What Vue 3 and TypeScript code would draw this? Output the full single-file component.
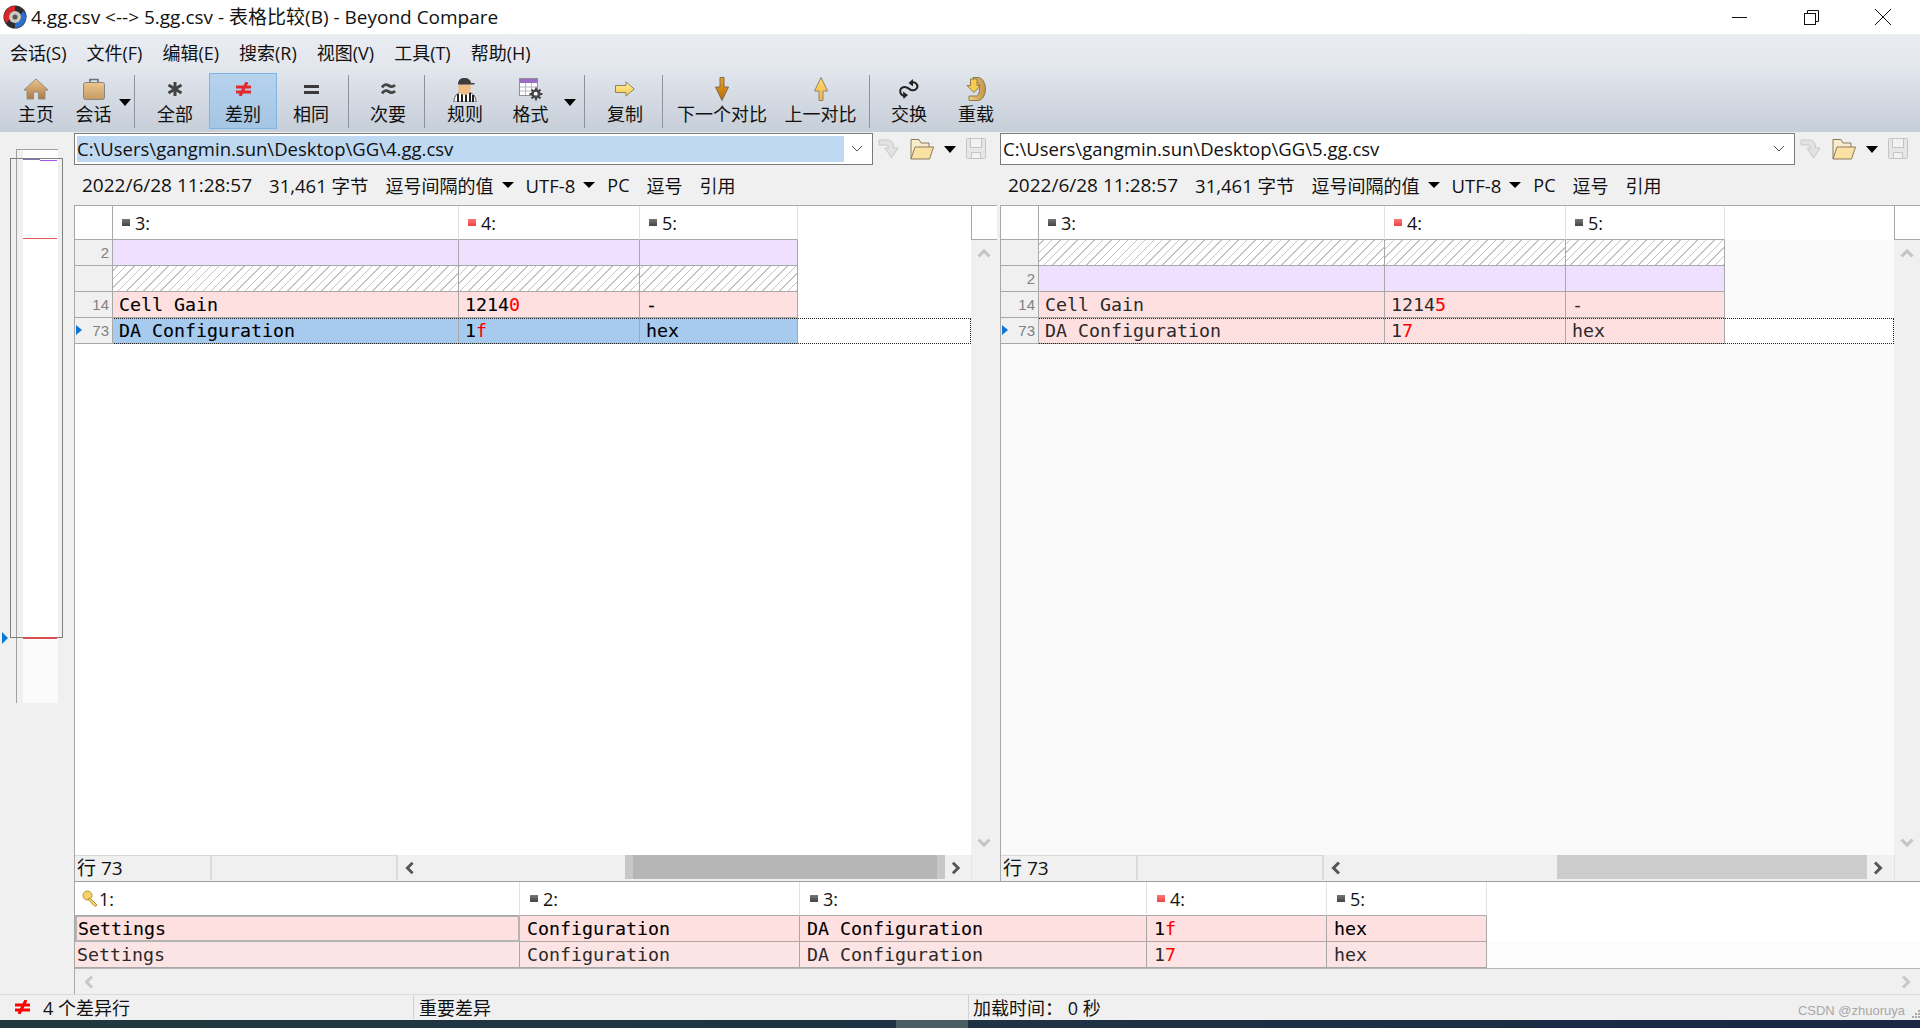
<script setup lang="ts">
interface Cell {
  text: string
  diff?: string
}
interface Row {
  line: string
  kind: 'added' | 'hatch' | 'diff'
  cells: Cell[]
  current?: boolean
}
interface Pane {
  id: string
  path: string
  columns: string
  active: boolean
  rows: Row[]
}
interface Tool {
  id: string
  label: string
  width: number
  active?: boolean
  menu?: 'near' | 'far'
  sep?: boolean
}

const menus = ['会话(S)', '文件(F)', '编辑(E)', '搜索(R)', '视图(V)', '工具(T)', '帮助(H)']

const tools: Tool[] = [
  { id: 'home', label: '主页', width: 68 },
  { id: 'case', label: '会话', width: 47, menu: 'near', sep: true },
  { id: 'all', label: '全部', width: 68 },
  { id: 'diff', label: '差别', width: 68, active: true },
  { id: 'same', label: '相同', width: 68, sep: true },
  { id: 'minor', label: '次要', width: 66, sep: true },
  { id: 'rules', label: '规则', width: 68 },
  { id: 'format', label: '格式', width: 63, menu: 'far', sep: true },
  { id: 'copy', label: '复制', width: 68, sep: true },
  { id: 'next', label: '下一个对比', width: 106 },
  { id: 'prev', label: '上一对比', width: 91, sep: true },
  { id: 'swap', label: '交换', width: 66 },
  { id: 'reload', label: '重载', width: 68 },
]

const headCols = [
  { label: '3:', red: false },
  { label: '4:', red: true },
  { label: '5:', red: false },
]

const panes: Pane[] = [
  {
    id: 'left',
    path: 'C:\\Users\\gangmin.sun\\Desktop\\GG\\4.gg.csv',
    columns: '38px 346px 181px 158px 1fr',
    active: true,
    rows: [
      { line: '2', kind: 'added', cells: [{ text: '' }, { text: '' }, { text: '' }] },
      { line: '', kind: 'hatch', cells: [{ text: '' }, { text: '' }, { text: '' }] },
      { line: '14', kind: 'diff', cells: [{ text: 'Cell Gain' }, { text: '1214', diff: '0' }, { text: '-' }] },
      {
        line: '73',
        kind: 'diff',
        current: true,
        cells: [{ text: 'DA Configuration' }, { text: '1', diff: 'f' }, { text: 'hex' }],
      },
    ],
  },
  {
    id: 'right',
    path: 'C:\\Users\\gangmin.sun\\Desktop\\GG\\5.gg.csv',
    columns: '38px 346px 181px 159px 1fr',
    active: false,
    rows: [
      { line: '', kind: 'hatch', cells: [{ text: '' }, { text: '' }, { text: '' }] },
      { line: '2', kind: 'added', cells: [{ text: '' }, { text: '' }, { text: '' }] },
      { line: '14', kind: 'diff', cells: [{ text: 'Cell Gain' }, { text: '1214', diff: '5' }, { text: '-' }] },
      {
        line: '73',
        kind: 'diff',
        current: true,
        cells: [{ text: 'DA Configuration' }, { text: '1', diff: '7' }, { text: 'hex' }],
      },
    ],
  },
]

const detailColumns = '445px 280px 347px 180px 160px 1fr'
const detailHead = [
  { label: '2:', red: false },
  { label: '3:', red: false },
  { label: '4:', red: true },
  { label: '5:', red: false },
]
const detailRows = [
  [{ text: 'Settings' }, { text: 'Configuration' }, { text: 'DA Configuration' }, { text: '1', diff: 'f' }, { text: 'hex' }],
  [{ text: 'Settings' }, { text: 'Configuration' }, { text: 'DA Configuration' }, { text: '1', diff: '7' }, { text: 'hex' }],
] as Cell[][]

// resize grip in the corner of the status bar
const gripDots = [
  [8, 1],
  [5, 4],
  [8, 4],
  [2, 7],
  [5, 7],
  [8, 7],
]
</script>

<template>
  <div class="app">
    <header class="titlebar">
      <svg class="logo" width="26" height="26" viewBox="0 0 26 26">
        <circle cx="13" cy="13" r="11.5" fill="#2b2b30" />
        <path d="M2 13A11 11 0 0 1 13 2V7A6 6 0 0 0 7 13H10L4.500 19L1 13Z" fill="#d8262c" />
        <path d="M24 13A11 11 0 0 1 13 24V19A6 6 0 0 0 19 13H16L21.500 7L25 13Z" fill="#2a6fd0" />
        <circle cx="13" cy="13" r="6" fill="#c9c9c0" />
        <circle cx="13" cy="13" r="2.500" fill="#56564e" />
      </svg>
      <span class="title">4.gg.csv &lt;--&gt; 5.gg.csv - 表格比较(B) - Beyond Compare</span>
      <div class="winctl">
        <svg width="18" height="18" viewBox="0 0 18 18"><path d="M2 9.500H17" stroke="#111" stroke-width="1" /></svg>
        <svg width="18" height="18" viewBox="0 0 18 18" fill="none" stroke="#111">
          <rect x="2.500" y="5.500" width="11" height="11" />
          <path d="M5.500 5.500V2.500H16.500V13.500H13.500" />
        </svg>
        <svg width="18" height="18" viewBox="0 0 18 18"><path d="M1 1L17 17M17 1L1 17" stroke="#111" stroke-width="1" /></svg>
      </div>
    </header>

    <div class="chrome">
      <nav class="menubar">
        <span v-for="m in menus" :key="m">{{ m }}</span>
      </nav>
      <div class="toolbar">
        <template v-for="t in tools" :key="t.id">
          <button class="tool" :class="{ on: t.active }" :style="{ width: t.width + 'px' }">
            <span class="tool-icon">
              <svg v-if="t.id === 'home'" width="26" height="22" viewBox="0 0 26 22">
                <defs>
                  <linearGradient id="homeFill" x1="0" y1="0" x2="0" y2="1">
                    <stop offset="0" stop-color="#eec48c" />
                    <stop offset="1" stop-color="#ad7a42" />
                  </linearGradient>
                </defs>
                <path d="M13 1L25 12H22V21H15.500V14H10.500V21H4V12H1Z" fill="url(#homeFill)" stroke="#8f8c80" />
              </svg>
              <svg v-else-if="t.id === 'case'" width="22" height="22" viewBox="0 0 22 22">
                <defs>
                  <linearGradient id="caseFill" x1="0" y1="0" x2="0" y2="1">
                    <stop offset="0" stop-color="#ecc68e" />
                    <stop offset="1" stop-color="#c69a62" />
                  </linearGradient>
                </defs>
                <path d="M7 5V1.500H15V5" fill="none" stroke="#707070" stroke-width="1.600" />
                <rect x="0.500" y="4.500" width="21" height="17" rx="2" fill="url(#caseFill)" stroke="#868686" />
              </svg>
              <svg v-else-if="t.id === 'all'" width="16" height="14" viewBox="0 0 16 14">
                <path d="M8 0V14M1.500 3L14.500 11M14.500 3L1.500 11" stroke="#444" stroke-width="3" />
              </svg>
              <svg v-else-if="t.id === 'diff'" width="15" height="14" viewBox="0 0 15 14">
                <path d="M0 5H15M0 10H15M11 0L4 14" stroke="#e02a2e" stroke-width="3" />
              </svg>
              <svg v-else-if="t.id === 'same'" width="15" height="9" viewBox="0 0 15 9">
                <path d="M0 1.500H15M0 7.500H15" stroke="#3a3a3a" stroke-width="3" />
              </svg>
              <svg v-else-if="t.id === 'minor'" width="15" height="12" viewBox="0 0 15 12" fill="none">
                <path d="M1 4.500Q4 0 7.500 2.500T14 2M1 10.500Q4 6 7.500 8.500T14 8" stroke="#444" stroke-width="2.800" />
              </svg>
              <svg v-else-if="t.id === 'rules'" width="24" height="25" viewBox="0 0 24 25">
                <path d="M1 25C1 18 5 16 8 15H15C19 16 23 18 23 25Z" fill="#fff" stroke="#555" />
                <path d="M5 17V25M9 15.500V25M13 15.500V25M17 16V25M20 18V25" stroke="#222" stroke-width="2" />
                <ellipse cx="11.500" cy="11" rx="6.500" ry="7" fill="#eebd88" />
                <path d="M5 8C5 2 8 1 11.500 1C15 1 18 3 18 6H21.500V7.500H5Z" fill="#3c3c3c" />
              </svg>
              <svg v-else-if="t.id === 'format'" width="24" height="23" viewBox="0 0 24 23">
                <rect x="0.500" y="0.500" width="18" height="17" fill="#fff" stroke="#909090" />
                <rect x="1" y="1" width="17" height="4" fill="#9a6cc8" />
                <path d="M1 9H18M1 13H18M6.500 5V17M12.500 5V17" stroke="#b8b8c0" />
                <circle cx="17" cy="16" r="3.500" fill="none" stroke="#444" stroke-width="2.400" />
                <path d="M17 9.500V22.500M10.500 16H23.500M12.500 11.500L21.500 20.500M21.500 11.500L12.500 20.500" stroke="#444" stroke-width="1.800" stroke-dasharray="2.600 8 2.600" />
              </svg>
              <svg v-else-if="t.id === 'copy'" width="20" height="16" viewBox="0 0 20 16">
                <defs>
                  <linearGradient id="copyFill" x1="0" y1="0" x2="0" y2="1">
                    <stop offset="0" stop-color="#fff0a0" />
                    <stop offset="1" stop-color="#f4c848" />
                  </linearGradient>
                </defs>
                <path d="M.5 4.500H11V.8L19.200 8L11 15.200V11.500H.5Z" fill="url(#copyFill)" stroke="#8c8468" />
              </svg>
              <svg v-else-if="t.id === 'next'" width="14" height="24" viewBox="0 0 14 24">
                <defs>
                  <linearGradient id="nextFill" x1="0" y1="0" x2="0" y2="1">
                    <stop offset="0" stop-color="#f0a020" />
                    <stop offset="1" stop-color="#b86c08" />
                  </linearGradient>
                </defs>
                <path d="M5 .5H9V10H13.500L7 23.500L.5 10H5Z" fill="url(#nextFill)" stroke="#7c6a50" />
              </svg>
              <svg v-else-if="t.id === 'prev'" width="14" height="24" viewBox="0 0 14 24">
                <defs>
                  <linearGradient id="prevFill" x1="0" y1="0" x2="0" y2="1">
                    <stop offset="0" stop-color="#ffd870" />
                    <stop offset="1" stop-color="#f2b840" />
                  </linearGradient>
                </defs>
                <path d="M5 23.500H9V14H13.500L7 .5L.5 14H5Z" fill="url(#prevFill)" stroke="#8c8468" />
              </svg>
              <svg v-else-if="t.id === 'swap'" width="22" height="20" viewBox="0 0 22 20" fill="none">
                <path d="M6 17C1 15 1 9 6 8C9 7.500 11 10 13 11C18 12.500 21 8 18.500 5C17 3 14.500 3 12 4" stroke="#222" stroke-width="2" />
                <path d="M15 0L10.500 4L15 7.500Z" fill="#222" />
                <path d="M5 12.500L10 16L5.500 20Z" fill="#222" />
              </svg>
              <svg v-else-if="t.id === 'reload'" width="20" height="24" viewBox="0 0 20 24">
                <defs>
                  <linearGradient id="loadFill" x1="0" y1="0" x2="1" y2="0">
                    <stop offset="0" stop-color="#f0d080" />
                    <stop offset="1" stop-color="#c09448" />
                  </linearGradient>
                </defs>
                <path d="M7 .5H12A7.500 11.500 0 0 1 12 23.500H3V19H10.500A3 7 0 0 0 10.500 5H7Z" fill="url(#loadFill)" stroke="#8c7a50" />
                <path d="M4.500 2H11V8.500H14.500L8 15.500L1 8.500H4.500Z" fill="#f8cc50" stroke="#8c7a50" />
              </svg>
            </span>
            <span class="tool-label">{{ t.label }}</span>
          </button>
          <i v-if="t.menu" class="tool-caret" :class="t.menu" />
          <i v-if="t.sep" class="tool-sep" />
        </template>
      </div>
    </div>

    <div class="body">
      <aside class="overview">
        <div class="ov-lane">
          <div class="ov-frame" />
          <i class="ov-mark purple dim" />
          <i class="ov-mark purple half" />
          <i class="ov-mark red" />
          <i class="ov-mark red strong" />
        </div>
        <i class="ov-pointer" />
      </aside>

      <div class="work">
        <div class="panes">
          <section v-for="p in panes" :key="p.id" class="pane" :class="p.id">
            <div class="addr-row">
              <div class="addr">
                <span class="addr-text" :class="{ picked: p.active }">{{ p.path }}</span>
                <svg class="addr-chev" width="12" height="8" viewBox="0 0 12 8" fill="none">
                  <path d="M1 1L6 6L11 1" stroke="#555" />
                </svg>
              </div>
              <div class="addr-tools">
                <svg width="22" height="20" viewBox="0 0 22 20">
                  <path d="M1 1H9C14 1 15.500 4 15.500 9H20L13.500 19L7 9H10.500C10.500 7 9.500 6 8 6H1Z" fill="#e2e2e2" stroke="#c8c8c8" />
                </svg>
                <svg width="24" height="22" viewBox="0 0 24 22">
                  <path d="M1 21V1.500H9L11 5H19V9" fill="#f8eccc" stroke="#8a7a5a" />
                  <path d="M1 21L5 9H23.500L19.500 21Z" fill="#fbe2a4" stroke="#8a7a5a" />
                </svg>
                <i class="caret" />
                <svg width="20" height="22" viewBox="0 0 20 22" fill="none" stroke="#c4c4c4">
                  <rect x="0.500" y="0.500" width="19" height="20" rx="1" fill="#e6e6e6" />
                  <rect x="4.500" y="0.500" width="11" height="9" fill="#f2f2f2" />
                  <rect x="5.500" y="14.500" width="9" height="6" fill="#f2f2f2" />
                </svg>
              </div>
            </div>

            <div class="info">
              <span class="stamp">2022/6/28 11:28:57</span>
              <span class="bytes">31,461 字节</span>
              <span class="with-caret">逗号间隔的值<i class="caret small" /></span>
              <span class="with-caret bytes">UTF-8<i class="caret small" /></span>
              <span>PC</span>
              <span>逗号</span>
              <span>引用</span>
            </div>

            <div class="grid-box">
              <div class="grid" :class="{ idle: !p.active }">
                <div class="row head" :style="{ gridTemplateColumns: p.columns }">
                  <div class="gutter-head" />
                  <div v-for="c in headCols" :key="c.label" class="col-head">
                    <i class="col-mark" :class="{ red: c.red }" />{{ c.label }}
                  </div>
                </div>
                <div
                  v-for="(r, i) in p.rows"
                  :key="i"
                  class="row"
                  :class="{ current: r.current }"
                  :style="{ gridTemplateColumns: p.columns }"
                >
                  <div class="gutter">
                    <i v-if="r.current" class="pointer" />
                    {{ r.line }}
                  </div>
                  <div
                    v-for="(c, j) in r.cells"
                    :key="j"
                    class="cell"
                    :class="[r.kind, { blue: r.current && p.active }]"
                  >{{ c.text }}<span v-if="c.diff" class="delta">{{ c.diff }}</span></div>
                </div>
              </div>
              <div class="vscroll">
                <div class="corner" />
                <div class="vtrack">
                  <svg width="14" height="9" viewBox="0 0 14 9" fill="none"><path d="M1.500 7.500L7 2L12.500 7.500" stroke="#c4c4c4" stroke-width="3" /></svg>
                  <svg width="14" height="9" viewBox="0 0 14 9" fill="none"><path d="M1.500 1.500L7 7L12.500 1.500" stroke="#c4c4c4" stroke-width="3" /></svg>
                </div>
              </div>
            </div>

            <div class="pane-status">
              <span class="st-line">行 73</span>
              <span class="st-empty" />
              <div class="hscroll">
                <svg width="10" height="14" viewBox="0 0 10 14" fill="none"><path d="M8 1.500L2.500 7L8 12.500" stroke="#555" stroke-width="3" /></svg>
                <div class="hthumb" />
                <svg width="10" height="14" viewBox="0 0 10 14" fill="none"><path d="M2 1.500L7.500 7L2 12.500" stroke="#555" stroke-width="3" /></svg>
              </div>
              <span class="st-corner" />
            </div>
          </section>
        </div>

        <section class="detail">
          <div class="row d-head" :style="{ gridTemplateColumns: detailColumns }">
            <div class="d-col first">
              <svg width="16" height="17" viewBox="0 0 16 17">
                <circle cx="5.500" cy="5.500" r="4.500" fill="#f6d268" stroke="#b89030" />
                <path d="M8 8L15 15L13 16.500L11.500 15L10.500 14L6 9Z" fill="#f6d268" stroke="#b89030" />
              </svg>
              1:
            </div>
            <div v-for="c in detailHead" :key="c.label" class="d-col">
              <i class="col-mark" :class="{ red: c.red }" />{{ c.label }}
            </div>
          </div>
          <div
            v-for="(r, i) in detailRows"
            :key="i"
            class="row d-row"
            :class="{ lower: i === 1 }"
            :style="{ gridTemplateColumns: detailColumns }"
          >
            <div
              v-for="(c, j) in r"
              :key="j"
              class="d-cell"
              :class="{ first: j === 0, focus: i === 0 && j === 0 }"
            >{{ c.text }}<span v-if="c.diff" class="delta">{{ c.diff }}</span></div>
          </div>
          <div class="d-scroll">
            <svg width="10" height="14" viewBox="0 0 10 14" fill="none"><path d="M8 1.500L2.500 7L8 12.500" stroke="#c8c8c8" stroke-width="3" /></svg>
            <svg width="10" height="14" viewBox="0 0 10 14" fill="none"><path d="M2 1.500L7.500 7L2 12.500" stroke="#c8c8c8" stroke-width="3" /></svg>
          </div>
        </section>
      </div>
    </div>

    <footer class="statusbar">
      <div class="sb-cell one">
        <svg width="15" height="14" viewBox="0 0 15 14">
          <path d="M0 5H15M0 10H15M11 0L4 14" stroke="#f00" stroke-width="3" />
        </svg>
        <span>4 个差异行</span>
      </div>
      <div class="sb-cell two">重要差异</div>
      <div class="sb-cell three">加载时间：&nbsp;0 秒</div>
      <span class="watermark">CSDN @zhuoruya</span>
      <svg class="grip" width="10" height="10" viewBox="0 0 10 10">
        <rect v-for="(d, i) in gripDots" :key="i" :x="d[0]" :y="d[1]" width="2" height="2" fill="#a8a8a8" />
      </svg>
    </footer>
    <div class="taskbar"><i class="task-item" /></div>
  </div>
</template>

<style>
html,
body {
  margin: 0;
  overflow: hidden;
  background: #f0f0f0;
}
</style>

<style scoped>
.app {
  width: 1920px;
  height: 1028px;
  display: flex;
  flex-direction: column;
  overflow: hidden;
  font-family: 'Open Sans', 'Noto Sans CJK SC', sans-serif;
  font-size: 18px;
  color: #111;
  background: #f0f0f0;
}

/* title bar */
.titlebar {
  height: 34px;
  flex: none;
  display: flex;
  align-items: center;
  background: #fff;
  padding-left: 2px;
}
.logo {
  margin-right: 3px;
}
.title {
  line-height: 34px;
  font-size: 19px;
  white-space: nowrap;
}
.winctl {
  margin-left: auto;
  display: flex;
  gap: 54px;
  padding-right: 28px;
  align-items: center;
}

/* menu + toolbar share one gradient */
.chrome {
  height: 98px;
  flex: none;
  background: linear-gradient(#eaedf2, #e2e6ed 35%, #c6ced8);
  border-bottom: 0;
}
.menubar {
  height: 38px;
  display: flex;
  align-items: center;
  gap: 20px;
  padding: 0 0 2px 10px;
  box-sizing: border-box;
}
.toolbar {
  height: 60px;
  display: flex;
  align-items: flex-start;
  padding: 1px 0 0 2px;
  box-sizing: border-box;
}
.tool {
  flex: none;
  height: 56px;
  padding: 2px 0 0;
  margin: 0;
  border: 1px solid transparent;
  background: none;
  box-sizing: border-box;
  display: flex;
  flex-direction: column;
  align-items: center;
  font: inherit;
  color: inherit;
}
.tool.on {
  background: linear-gradient(#b6d3ee, #a4c5e4);
  border-color: #7fb5e6;
}
.tool-icon {
  height: 26px;
  display: flex;
  align-items: center;
  justify-content: center;
}
.tool-label {
  line-height: 24px;
  white-space: nowrap;
}
.tool-caret {
  flex: none;
  width: 0;
  height: 0;
  margin: 26px 0 0 2px;
  border-left: 6.5px solid transparent;
  border-right: 6.5px solid transparent;
  border-top: 7px solid #000;
}
.tool-caret.far {
  margin: 26px 5px 0 2px;
}
.tool-sep {
  flex: none;
  width: 1px;
  height: 53px;
  margin: 2px 6px 0 3px;
  background: #8c939c;
}

/* work area */
.body {
  flex: 1;
  min-height: 0;
  display: flex;
}
.overview {
  width: 74px;
  flex: none;
  position: relative;
}
.ov-lane {
  position: absolute;
  left: 16px;
  top: 17px;
  width: 42px;
  height: 554px;
  box-sizing: border-box;
  border-top: 1px solid #a0a0a0;
  border-left: 1px solid #a0a0a0;
  background: linear-gradient(90deg, #f0f0f0 6px, #fff 6px);
}
.ov-frame {
  position: absolute;
  left: -7px;
  top: 8px;
  width: 53px;
  height: 480px;
  box-sizing: border-box;
  border: 1px solid #808080;
  z-index: 1;
}
.ov-lane::after {
  content: '';
  position: absolute;
  left: 6px;
  right: 0;
  top: 489px;
  bottom: 0;
  background: #fbfbfb;
}
.ov-mark {
  position: absolute;
  left: 6px;
  right: 1px;
  height: 1px;
  z-index: 2;
}
.ov-mark.purple {
  top: 9px;
  background: #a855f7;
}
.ov-mark.purple.dim {
  right: 18px;
  background: #8a6cc0;
}
.ov-mark.purple.half {
  left: 23px;
  top: 10px;
}
.ov-mark.red {
  top: 88px;
  background: #e25656;
}
.ov-mark.red.strong {
  top: 487px;
  height: 2px;
  background: #d85050;
}
.ov-pointer {
  position: absolute;
  left: 2px;
  top: 500px;
  width: 0;
  height: 0;
  border-left: 6px solid #0a78d8;
  border-top: 6px solid transparent;
  border-bottom: 6px solid transparent;
}

.work {
  flex: 1;
  min-width: 0;
  display: flex;
  flex-direction: column;
}
.panes {
  height: 749px;
  flex: none;
  display: flex;
  gap: 3px;
}
.pane {
  display: flex;
  flex-direction: column;
}
.pane.left {
  width: 923px;
}
.pane.right {
  width: 920px;
}

.addr-row {
  height: 32px;
  margin-top: 1px;
  display: flex;
  flex: none;
}
.addr {
  flex: 1;
  min-width: 0;
  box-sizing: border-box;
  border: 1px solid #7a7a7a;
  background: #fff;
  display: flex;
  align-items: center;
  padding: 0 2px;
}
.addr-text {
  flex: 0 0 calc(100% - 26px);
  line-height: 26px;
  font-size: 18.5px;
  box-sizing: border-box;
  white-space: nowrap;
}
.addr-text.picked {
  background: #bfd9f2;
}
.addr-chev {
  margin-left: 7px;
}
.addr-tools {
  width: 124px;
  flex: none;
  display: flex;
  align-items: center;
  gap: 10px;
  padding-left: 5px;
  box-sizing: border-box;
}
.pane.right .addr-tools {
  width: 125px;
}
.caret {
  display: block;
  width: 0;
  height: 0;
  border-left: 6px solid transparent;
  border-right: 6px solid transparent;
  border-top: 7px solid #000;
}
.caret.small {
  border-top-width: 6px;
  margin: 0 -5px 0 8px;
}

.info {
  height: 40px;
  flex: none;
  display: flex;
  align-items: center;
  gap: 17px;
  padding-left: 8px;
  white-space: nowrap;
}
.stamp {
  font-size: 19px;
}
.bytes {
  font-size: 18.5px;
}
.with-caret {
  display: flex;
  align-items: center;
}

.grid-box {
  flex: 1;
  min-height: 0;
  display: flex;
  border-top: 1px solid #a8a8a8;
  border-left: 1px solid #a8a8a8;
  background: #fff;
}
.grid {
  flex: 1;
  min-width: 0;
}
.grid.idle {
  background: #fafafa;
  color: #333;
}
.row {
  display: grid;
  height: 26px;
  box-sizing: border-box;
}
.row.head {
  height: 34px;
  background: #fff;
}
.gutter-head {
  border-right: 1px solid #a8a8a8;
  border-bottom: 1px solid #a8a8a8;
}
.col-head {
  display: flex;
  align-items: center;
  padding-left: 9px;
  border-right: 1px solid #e2e2e2;
  border-bottom: 1px solid #a8a8a8;
  color: #111;
}
.col-mark {
  width: 8px;
  height: 7px;
  margin-right: 5px;
  background: linear-gradient(#777, #444);
  flex: none;
}
.col-mark.red {
  background: linear-gradient(#f77, #e44);
}
.row.current {
  position: relative;
  background: #fff;
  outline: 1px dotted #222;
  outline-offset: -1px;
}
.gutter {
  position: relative;
  background: #f0f0f0;
  border-right: 1px solid #a8a8a8;
  border-bottom: 1px solid #a8a8a8;
  font: 15px/25px 'Liberation Sans', sans-serif;
  color: #808080;
  text-align: right;
  padding-right: 3px;
}
.pointer {
  position: absolute;
  left: 1px;
  top: 7px;
  width: 0;
  height: 0;
  border-left: 6px solid #0a78d8;
  border-top: 5px solid transparent;
  border-bottom: 5px solid transparent;
}
.cell {
  border-right: 1px solid #a8a8a8;
  border-bottom: 1px solid #a8a8a8;
  padding-left: 6px;
  font: 18.3px/25px 'DejaVu Sans Mono', monospace;
  white-space: pre;
  overflow: hidden;
  color: #000;
  -webkit-text-stroke: 0.1px #000;
}
.grid.idle .cell {
  color: #2a2a2a;
  -webkit-text-stroke: 0;
}
.cell.added {
  background: #f0e0ff;
}
.cell.hatch {
  background: repeating-linear-gradient(-45deg, #c4c4c4 0 1px, #fff 1px 6px);
}
.cell.diff {
  background: #ffe0e0;
}
.cell.blue {
  background: #a6cbef;
}
.delta {
  color: #f00;
  -webkit-text-stroke-color: #f00;
}

.vscroll {
  width: 26px;
  flex: none;
  display: flex;
  flex-direction: column;
  background: #f0f0f0;
}
.corner {
  height: 34px;
  flex: none;
  box-sizing: border-box;
  background: #fff;
  border-left: 1px solid #a8a8a8;
  border-bottom: 1px solid #a8a8a8;
}
.vtrack {
  flex: 1;
  display: flex;
  flex-direction: column;
  align-items: center;
  justify-content: space-between;
  padding: 9px 0 8px;
}

.pane-status {
  height: 26px;
  flex: none;
  display: flex;
  box-sizing: border-box;
  border-left: 1px solid #a8a8a8;
  padding-bottom: 1px;
}
.st-line {
  width: 137px;
  flex: none;
  padding-left: 2px;
  box-sizing: border-box;
  line-height: 24px;
  font-size: 19px;
  border-top: 1px solid #d8d8d8;
  border-right: 2px solid #dcdcdc;
}
.st-empty {
  width: 186px;
  flex: none;
  border-top: 1px solid #d8d8d8;
  border-right: 2px solid #dcdcdc;
  box-sizing: border-box;
}
.hscroll {
  flex: 1;
  min-width: 0;
  display: flex;
  align-items: center;
  padding: 0 11px 0 7px;
}
.hthumb {
  flex: none;
  align-self: stretch;
  height: 24px;
  background: #b6b6b6;
  box-shadow: inset 8px 0 #c8c8c8, inset -8px 0 #c8c8c8;
  width: 320px;
  margin-left: 210px;
  margin-right: 6px;
}
.pane.right .hscroll {
  padding: 0 9px 0 7px;
}
.pane.right .hthumb {
  width: 310px;
  margin-left: 216px;
  background: #ccc;
  box-shadow: none;
}
.st-corner {
  width: 26px;
  flex: none;
  box-sizing: border-box;
  border-left: 1px solid #e4e4e4;
}

.detail {
  height: 113px;
  flex: none;
  box-sizing: border-box;
  border-top: 1px solid #a0a0a0;
  border-left: 1px solid #a8a8a8;
  background: #fff;
  display: flex;
  flex-direction: column;
}
.row.d-head {
  height: 34px;
  flex: none;
}
.d-col {
  display: flex;
  align-items: center;
  padding-left: 10px;
  border-right: 1px solid #e2e2e2;
  border-bottom: 1px solid #a8a8a8;
}
.d-col.first {
  padding-left: 7px;
  gap: 1px;
}
.row.d-row {
  flex: none;
}
.row.d-row.lower {
  background: #fcfcfc;
  color: #333;
}
.d-cell {
  background: #ffe0e0;
  border-right: 1px solid #a8a8a8;
  border-bottom: 1px solid #a8a8a8;
  padding-left: 7px;
  font: 18.3px/25px 'DejaVu Sans Mono', monospace;
  white-space: pre;
  overflow: hidden;
  color: #000;
  -webkit-text-stroke: 0.1px #000;
}
.d-cell.first {
  padding-left: 2px;
}
.d-cell.focus {
  border: 2px solid #b4b4b4;
  border-top-width: 1px;
  padding-left: 1px;
  line-height: 24px;
}
.row.d-row.lower .d-cell {
  background: #fde4e4;
  color: #2a2a2a;
  -webkit-text-stroke: 0;
}
.d-scroll {
  flex: 1;
  display: flex;
  align-items: center;
  justify-content: space-between;
  padding: 0 9px;
  background: #f0f0f0;
  border-top: 1px solid #b4b4b4;
}

.statusbar {
  height: 26px;
  flex: none;
  position: relative;
  display: flex;
  box-sizing: border-box;
  border-top: 1px solid #dcdcdc;
}
.sb-cell {
  display: flex;
  align-items: center;
  white-space: nowrap;
  height: 24px;
}
.sb-cell.one {
  width: 414px;
  padding-left: 15px;
  gap: 13px;
  box-sizing: border-box;
  border-right: 1px solid #d0d0d0;
}
.sb-cell.two {
  width: 555px;
  padding-left: 5px;
  box-sizing: border-box;
  border-right: 1px solid #d0d0d0;
}
.sb-cell.three {
  padding-left: 4px;
}
.watermark {
  position: absolute;
  right: 15px;
  top: 7px;
  font: 13px/18px 'Liberation Sans', sans-serif;
  color: #a8a8a8;
}
.grip {
  position: absolute;
  right: 0;
  bottom: 1px;
}
.taskbar {
  height: 8px;
  flex: none;
  position: relative;
  background: linear-gradient(90deg, #21383f, #1f3344 50%, #1a2844);
}
.task-item {
  position: absolute;
  left: 896px;
  top: 0;
  width: 72px;
  height: 8px;
  background: #4a5c64;
}
</style>
